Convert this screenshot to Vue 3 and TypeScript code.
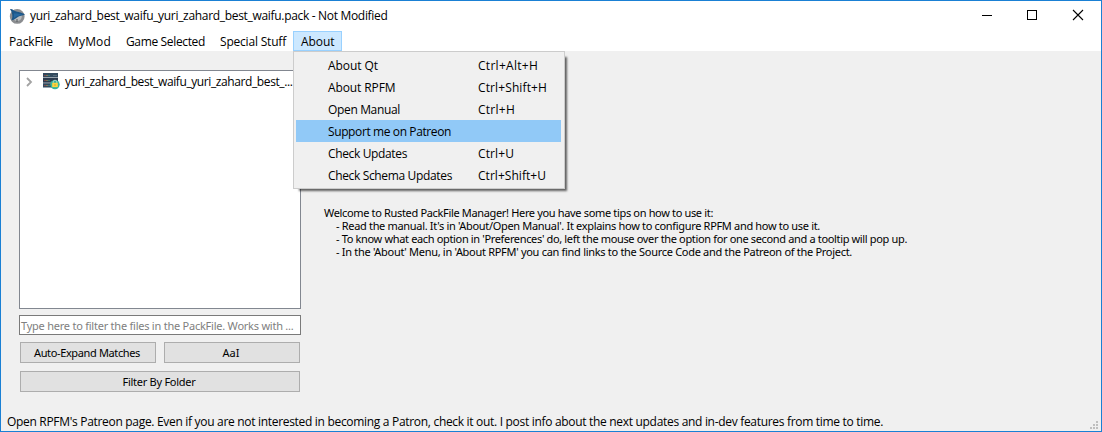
<script setup lang="ts">
// Sets the tracking of a label so that it takes the given advance width.
const vFit = {
  mounted(el: HTMLElement, binding: { value: number }) {
    const chars = (el.textContent ?? '').trim().length
    const natural = el.getBoundingClientRect().width
    el.style.letterSpacing = `${(binding.value - natural) / chars}px`
  },
}

interface Label { text: string; width: number }
interface Action extends Label { shortcut?: string; shortcutWidth?: number; active?: boolean }

const menus: Label[] = [
  { text: 'PackFile', width: 44 },
  { text: 'MyMod', width: 43 },
  { text: 'Game Selected', width: 79 },
  { text: 'Special Stuff', width: 66 },
]

const actions: Action[] = [
  { text: 'About Qt', width: 50, shortcut: 'Ctrl+Alt+H', shortcutWidth: 60 },
  { text: 'About RPFM', width: 67.5, shortcut: 'Ctrl+Shift+H', shortcutWidth: 69 },
  { text: 'Open Manual', width: 72, shortcut: 'Ctrl+H', shortcutWidth: 37 },
  { text: 'Support me on Patreon', width: 123, active: true },
  { text: 'Check Updates', width: 79, shortcut: 'Ctrl+U', shortcutWidth: 36 },
  { text: 'Check Schema Updates', width: 124, shortcut: 'Ctrl+Shift+U', shortcutWidth: 68 },
]

const tips: Label[] = [
  { text: "- Read the manual. It's in 'About/Open Manual'. It explains how to configure RPFM and how to use it.", width: 484 },
  { text: "- To know what each option in 'Preferences' do, left the mouse over the option for one second and a tooltip will pop up.", width: 571 },
  { text: "- In the 'About' Menu, in 'About RPFM' you can find links to the Source Code and the Patreon of the Project.", width: 516 },
]
</script>

<template>
  <div class="window">
    <header class="titlebar">
      <svg class="logo" width="16" height="16" viewBox="0 0 16 16">
        <circle cx="8.2" cy="8.4" r="6" fill="#b9bcbf" stroke="#8b8d90" stroke-width="2.8" />
        <path d="M8 14v-3" stroke="#626669" stroke-width="1.2" />
        <path d="M1 1C3.500 0.500 5 3.200 7.500 3.600 11 4.200 13.500 5.500 16 6.500 13.500 8 10.500 7.700 8.500 9.200 6.500 10.700 4.800 12 2.500 12.200 4 8.500 3.500 4.500 1 1Z" fill="#1c5688" />
        <path d="M5 5.500C8 5.200 11 6 14 6.600 11 7.200 8 8 5 10Z" fill="#2668a0" />
      </svg>
      <span v-fit="357.5" class="title">yuri_zahard_best_waifu_yuri_zahard_best_waifu.pack - Not Modified</span>
      <svg class="controls" width="104" height="12" viewBox="0 0 104 12" fill="none" stroke="#000" stroke-width="1">
        <path d="M0 6.500h10" />
        <rect x="45.500" y="1.500" width="9" height="9" />
        <path d="m91 1 10 10M101 1 91 11" stroke-width="1.100" />
      </svg>
    </header>

    <nav class="menubar">
      <span v-for="m in menus" :key="m.text" class="menu"><span v-fit="m.width">{{ m.text }}</span></span>
      <div class="menu open">
        <span v-fit="33.5">About</span>
        <div class="popup">
          <div v-for="a in actions" :key="a.text" class="action" :class="{ active: a.active }">
            <div class="name"><span v-fit="a.width">{{ a.text }}</span></div>
            <span v-if="a.shortcut" v-fit="a.shortcutWidth">{{ a.shortcut }}</span>
          </div>
        </div>
      </div>
    </nav>

    <main class="body">
      <section class="side">
        <div class="tree">
          <div class="node">
            <svg class="chevron" width="7" height="10" viewBox="0 0 7 10" fill="none" stroke="#a3a3a3" stroke-width="1.800">
              <path d="m1 1 4 4-4 4" />
            </svg>
            <svg class="pack" width="17" height="17" viewBox="0 0 17 17">
              <rect x="0" y="0" width="15" height="4.500" fill="#324a5e" />
              <rect x="0" y="5" width="15" height="4.700" fill="#2b3b4e" />
              <rect x="0" y="10.200" width="15" height="4.300" fill="#324a5e" />
              <path d="M1.500 2.500h1M1.500 7.500h1M1.500 12.500h1" stroke="#c94f45" />
              <path d="M3.500 2.500h1M3.500 7.500h1M3.500 12.500h1" stroke="#c9a552" />
              <path d="M5.500 2.500h1M5.500 7.500h1M5.500 12.500h1" stroke="#3fa596" />
              <path d="M10 2.500h4" stroke="#566b7c" />
              <circle cx="12" cy="11.600" r="4.700" fill="#34b69b" />
              <path d="M10.200 10V9a1.800 1.800 0 0 1 3.600 0v1" fill="none" stroke="#c3d6d2" stroke-width=".8" />
              <rect x="9.200" y="9.800" width="5.600" height="4.300" fill="#ffd33d" />
              <path d="M12 11.200v1.600" stroke="#b8a13a" />
            </svg>
            <span v-fit="227.5">yuri_zahard_best_waifu_yuri_zahard_best_...</span>
          </div>
        </div>
        <div class="filter"><span v-fit="272.5">Type here to filter the files in the PackFile. Works with ...</span></div>
        <div class="buttons">
          <button><span v-fit="106">Auto-Expand Matches</span></button>
          <button><span v-fit="17">AaI</span></button>
          <button class="wide"><span v-fit="73">Filter By Folder</span></button>
        </div>
      </section>

      <section class="welcome">
        <p><span v-fit="389">Welcome to Rusted PackFile Manager! Here you have some tips on how to use it:</span></p>
        <p v-for="t in tips" :key="t.text" class="tip"><span v-fit="t.width">{{ t.text }}</span></p>
      </section>
    </main>

    <footer class="status">
      <span v-fit="876">Open RPFM's Patreon page. Even if you are not interested in becoming a Patron, check it out. I post info about the next updates and in-dev features from time to time.</span>
      <svg class="grip" width="8" height="8" viewBox="0 0 8 8" fill="#bfbfbf">
        <path d="M6 0h2v2H6zM3 3h2v2H3zM6 3h2v2H6zM0 6h2v2H0zM3 6h2v2H3zM6 6h2v2H6z" />
      </svg>
    </footer>
  </div>
</template>

<style>
body {
  margin: 0;
  overflow: hidden;
}
</style>

<style scoped>
.window {
  box-sizing: border-box;
  width: 1102px;
  height: 432px;
  display: flex;
  flex-direction: column;
  border: 1px solid #1a80d4;
  background: #f0f0f0;
  color: #000;
  font: 12px/16px "Open Sans", "Noto Sans", sans-serif;
  white-space: nowrap;
}
.window svg {
  display: block;
  flex: none;
}
.titlebar {
  height: 30px;
  display: flex;
  align-items: center;
  padding: 0 12px 0 8px;
  background: #fff;
}
.logo {
  margin-top: -1px;
}
.title {
  margin-left: 5px;
}
.window .controls {
  margin: -2px 3px 0 auto;
}
.menubar {
  display: flex;
  height: 20px;
  background: #fff;
}
.menu {
  box-sizing: border-box;
  height: 20px;
  padding: 3px 7px 0 8px;
}
.open {
  position: relative;
  width: 49px;
  padding: 2px 7px 0;
  border: 1px solid #99d1ff;
  background: #cce8ff;
}
.popup {
  position: absolute;
  z-index: 1;
  left: -1px;
  top: 19px;
  box-sizing: border-box;
  width: 272px;
  height: 138px;
  padding: 2px 3px 2px 2px;
  border: 1px solid #ccc;
  background: #f0f0f0;
  box-shadow: 4px 4px 2px -2px rgba(0, 0, 0, 0.6);
}
.action {
  box-sizing: border-box;
  display: flex;
  height: 22px;
  line-height: 20px;
  padding: 2px 0 0 32px;
}
.name {
  width: 150px;
}
.active {
  background: #91c9f7;
}
.body {
  flex: 1;
  display: flex;
}
.side {
  width: 282px;
  padding: 19px 0 0 18px;
}
.tree {
  box-sizing: border-box;
  height: 239px;
  border: 1px solid #828790;
  background: #fff;
}
.node {
  display: flex;
  align-items: center;
  height: 21px;
}
.chevron {
  margin-left: 6px;
}
.pack {
  margin: 0 5px 0 10px;
}
.filter {
  box-sizing: border-box;
  height: 20px;
  margin-top: 6px;
  padding-left: 1px;
  border: 1px solid #7a7a7a;
  background: #fff;
  color: #808080;
  font: 11px/19px "Noto Sans", sans-serif;
}
.buttons {
  display: grid;
  grid-template-columns: 1fr 1fr;
  gap: 8px;
  margin: 7px 1px 0;
}
button {
  height: 21px;
  padding: 0;
  border: 1px solid #adadad;
  background: #e1e1e1;
  color: #000;
  font: 11px/19px "Noto Sans", sans-serif;
}
button span {
  margin-right: 2px;
}
.wide {
  grid-column: 1 / -1;
}
.welcome {
  margin: 155px 0 0 23px;
  font: 11px/13px "Noto Sans", sans-serif;
}
.welcome p {
  margin: 0;
}
.welcome .tip {
  padding-left: 12px;
}
.status {
  display: flex;
  justify-content: space-between;
  align-items: flex-end;
  height: 18px;
  padding: 0 3px 1px 6px;
}
.grip {
  margin-bottom: 1px;
}
</style>
